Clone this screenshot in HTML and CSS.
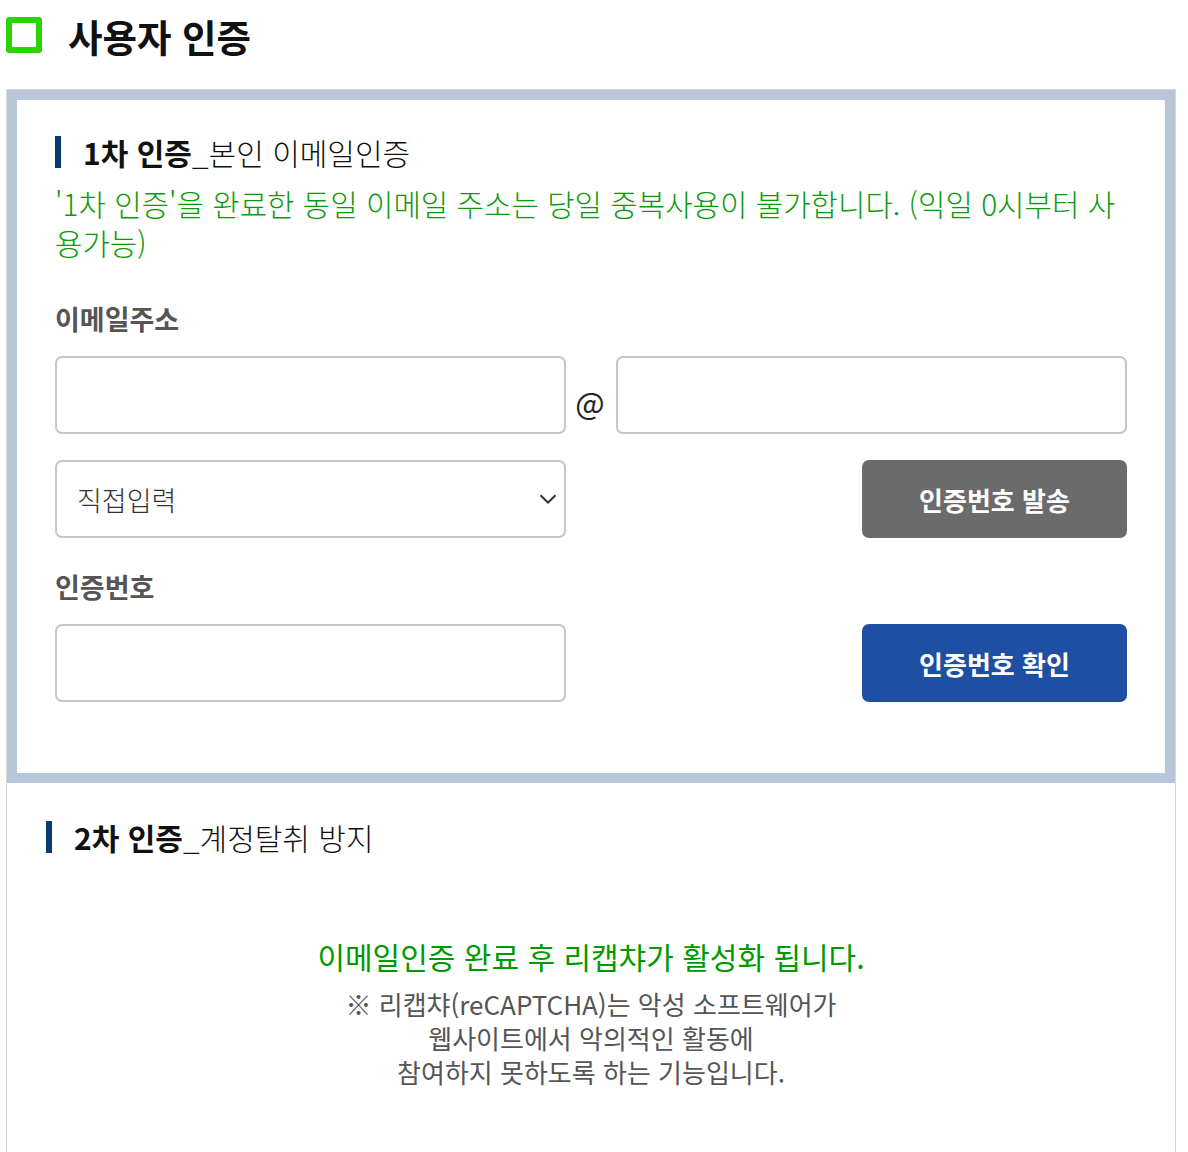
FILE: index.html
```html
<!DOCTYPE html>
<html lang="ko">
<head>
<meta charset="utf-8">
<title>사용자 인증</title>
<link rel="stylesheet" href="styles.css">
</head>
<body>
<div class="page">
  <h2 class="page-title"><span class="title-icon"></span>사용자 인증</h2>
  <div class="auth-box">
    <section class="step step-first">
      <h3 class="step-title"><strong>1차 인증</strong>_본인 이메일인증</h3>
      <p class="notice">'1차 인증'을 완료한 동일 이메일 주소는 당일 중복사용이 불가합니다. (익일 0시부터 사용가능)</p>
      <div class="field-label">이메일주소</div>
      <div class="email-row">
        <input class="text-input" type="text" aria-label="이메일 아이디">
        <span class="at">@</span>
        <input class="text-input" type="text" aria-label="이메일 도메인">
      </div>
      <div class="action-row">
        <div class="select-wrap">
          <select class="select" aria-label="도메인 선택">
            <option>직접입력</option>
          </select>
          <svg class="chevron" width="18" height="10" viewBox="0 0 18 10" aria-hidden="true"><path d="M1.5 1.2 L9 8.5 L16.5 1.2" fill="none" stroke="#333" stroke-width="2"/></svg>
        </div>
        <button class="btn btn-gray" type="button">인증번호 발송</button>
      </div>
      <div class="field-label field-label-second">인증번호</div>
      <div class="action-row">
        <input class="text-input code-input" type="text" aria-label="인증번호">
        <button class="btn btn-blue" type="button">인증번호 확인</button>
      </div>
    </section>
    <section class="step step-second">
      <h3 class="step-title"><strong>2차 인증</strong>_계정탈취 방지</h3>
      <p class="captcha-msg">이메일인증 완료 후 리캡챠가 활성화 됩니다.</p>
      <p class="captcha-desc">※ 리캡챠(reCAPTCHA)는 악성 소프트웨어가<br>웹사이트에서 악의적인 활동에<br>참여하지 못하도록 하는 기능입니다.</p>
    </section>
  </div>
</div>
</body>
</html>
```
FILE: styles.css
```css
* { box-sizing: border-box; }
html, body { margin: 0; padding: 0; background: #fff; }
body {
  font-family: "Noto Sans CJK KR", "Noto Sans", sans-serif;
  color: #111;
}
.page {
  padding: 0 12px 0 6px;
}
.page-title {
  display: flex;
  align-items: center;
  margin: 0;
  height: 72px;
  padding-bottom: 2px;
  font-size: 37.5px;
  font-weight: 700;
  color: #111;
}
.title-icon {
  width: 36px;
  height: 36px;
  border: 6px solid #2bd400;
  border-radius: 3px;
  margin-right: 26px;
  flex: none;
}
.auth-box {
  margin-top: 17px;
  border: 1px solid #d6d6d6;
  border-bottom: none;
  width: 1170px;
}
.step-first {
  border: 10px solid #b9c5d8;
  padding: 36px 38px 71px 38px;
}
.step-second {
  padding: 38px 39px 70px 39px;
}
.step-title {
  margin: 0;
  border-left: 6px solid #0b3a6e;
  padding-left: 22px;
  height: 32px;
  line-height: 32px;
  font-size: 30px;
  font-weight: 300;
  color: #111;
}
.step-title strong {
  font-weight: 700;
}
.notice {
  margin: 16px 0 0 0;
  font-size: 29.8px;
  line-height: 39px;
  font-weight: 300;
  color: #0c9a0c;
}
.field-label {
  margin-top: 37px;
  font-size: 27px;
  line-height: 39px;
  font-weight: 700;
  color: #555;
}
.field-label-second {
  margin-top: 29px;
}
.email-row {
  display: grid;
  grid-template-columns: 511px 50px 511px;
  align-items: center;
  margin-top: 18px;
}
.at {
  text-align: center;
  font-size: 31px;
  line-height: 40px;
  color: #222;
  font-family: "Noto Sans CJK KR", sans-serif;
  font-weight: 400;
  padding-top: 14px;
  padding-right: 2px;
}
.text-input {
  display: block;
  width: 511px;
  height: 78px;
  border: 2px solid #c6c6c6;
  border-radius: 7px;
  background: #fff;
  padding: 0 20px;
  font: inherit;
  font-size: 26px;
  outline: none;
}
.action-row {
  display: flex;
  justify-content: space-between;
  align-items: center;
  margin-top: 26px;
}
.field-label + .action-row {
  margin-top: 18px;
}
.select-wrap {
  position: relative;
  width: 511px;
  height: 78px;
}
.select {
  appearance: none;
  -webkit-appearance: none;
  width: 100%;
  height: 100%;
  border: 2px solid #c6c6c6;
  border-radius: 7px;
  background: #fff;
  padding: 0 40px 0 20px;
  font-family: "Noto Sans CJK KR", sans-serif;
  font-size: 27px;
  font-weight: 300;
  color: #333;
  outline: none;
}
.chevron {
  position: absolute;
  right: 9px;
  top: 34px;
  pointer-events: none;
}
.btn {
  width: 265px;
  height: 78px;
  border: none;
  border-radius: 7px;
  color: #fff;
  font-family: "Noto Sans CJK KR", sans-serif;
  font-size: 26px;
  font-weight: 700;
  cursor: pointer;
}
.btn-gray { background: #6b6b6b; }
.btn-blue { background: #1f4fa2; }
.captcha-msg {
  margin: 81px 0 0 0;
  text-align: center;
  font-size: 30px;
  line-height: 44px;
  font-weight: 400;
  color: #009900;
}
.captcha-desc {
  margin: 9px 0 0 0;
  text-align: center;
  font-size: 26px;
  line-height: 34px;
  font-weight: 400;
  color: #555;
}
```
